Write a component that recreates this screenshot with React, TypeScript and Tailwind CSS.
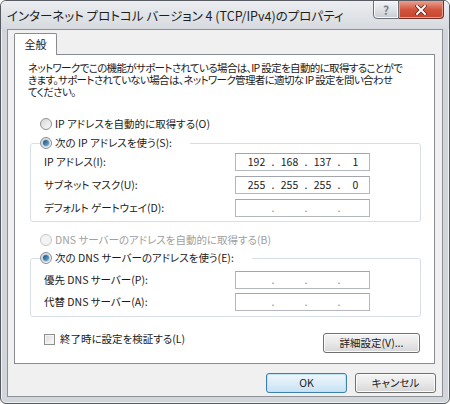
import React from 'react';

const FONT = "[font-family:'Noto_Sans_CJK_JP',sans-serif] [font-feature-settings:'palt']";

type RadioProps = { checked?: boolean; disabled?: boolean };

const Radio: React.FC<RadioProps> = ({ checked, disabled }) => (
  <span
    className={
      disabled
        ? 'w-[12px] h-[12px] rounded-full border border-[#c6c6c6] bg-[#f3f3f3] flex items-center justify-center shrink-0'
        : 'w-[12px] h-[12px] rounded-full border border-[#8e8f8f] bg-linear-to-br from-[#d6d6d6] to-[#fbfbfb] flex items-center justify-center shrink-0'
    }
  >
    {checked && (
      <span className="w-[6px] h-[6px] rounded-full bg-linear-to-br from-[#1d4d74] to-[#72b2de] shadow-[0_0_0_1px_#b9d3e6]" />
    )}
  </span>
);

const IpBox: React.FC<{ values?: string[] }> = ({ values }) => {
  const v = values ?? ['', '', '', ''];
  return (
    <div className="w-[135px] h-[18px] border border-[#b4b7bd] border-t-[#a3a6ad] bg-white flex items-center pl-[7px] leading-none">
      {v.map((n, i) => (
        <React.Fragment key={i}>
          <span className="w-[27px] text-center">{n}</span>
          {i < 3 && (
            <span className={values ? 'w-[6px] text-center' : 'w-[6px] text-center text-[#8a8a8a]'}>.</span>
          )}
        </React.Fragment>
      ))}
    </div>
  );
};

const Row: React.FC<{ label: string; values?: string[] }> = ({ label, values }) => (
  <>
    <div className="flex items-center h-[18px] whitespace-nowrap">{label}</div>
    <IpBox values={values} />
  </>
);

const Button: React.FC<{ children: React.ReactNode; primary?: boolean; className?: string }> = ({
  children,
  primary,
  className = '',
}) => (
  <button
    type="button"
    className={
      (primary
        ? 'border-[#3c7fb1] bg-linear-to-b from-[#eef7fc] via-[#dcedf8] to-[#c6e2f3] shadow-[inset_0_0_0_1px_#bfe3f8] '
        : 'border-[#707070] bg-linear-to-b from-[#f4f4f4] via-[#e9e9e9] to-[#d6d6d6] shadow-[inset_0_0_0_1px_#fcfcfc] ') +
      'h-[20px] border rounded-[3px] flex items-center justify-center text-[#1a1a1a] ' +
      className
    }
  >
    {children}
  </button>
);

export default function App() {
  return (
    <div
      className={`w-[450px] h-[404px] bg-[#d2d6db] border border-[#585c62] rounded-[6px] shadow-[inset_0_0_0_1px_#eef0f2] flex flex-col overflow-hidden ${FONT}`}
    >
      {/* Title bar */}
      <div className="h-[28px] flex items-start bg-linear-to-b from-[#eceef1] to-[#d6dade] shrink-0">
        <div className="flex-1 pl-[6px] pt-[6px] text-[12.5px] leading-[18px] text-[#1e1e1e] whitespace-nowrap">
          インターネット プロトコル バージョン 4 (TCP/IPv4)のプロパティ
        </div>
        <div className="flex mr-[5px] -mt-px">
          <div className="w-[26px] h-[19px] border border-[#6b7076] rounded-bl-[4px] bg-linear-to-b from-[#f3f4f6] via-[#dfe2e6] to-[#c8ccd2] shadow-[inset_0_0_0_1px_#f8f9fa] flex items-center justify-center text-[12px] font-bold text-[#7d8188] leading-none">
            ?
          </div>
          <div className="w-[45px] h-[19px] border border-l-0 border-[#6e3328] rounded-br-[4px] bg-linear-to-b from-[#e8a091] via-[#d2553f] to-[#c8432d] shadow-[inset_0_0_0_1px_#eb9b8c] flex items-center justify-center">
            <svg width="12" height="10" viewBox="0 0 12 10">
              <path d="M2 1 L10 9 M10 1 L2 9" stroke="#5a1f16" strokeWidth="3.4" strokeLinecap="square" />
              <path d="M2 1 L10 9 M10 1 L2 9" stroke="#ffffff" strokeWidth="2" strokeLinecap="square" />
            </svg>
          </div>
        </div>
      </div>

      {/* Client area */}
      <div className="flex-1 mx-[6px] mb-[6px] border border-[#8c9197] bg-[#f0f0f0] flex flex-col text-[10.5px] text-[#1a1a1a]">
        {/* Tab header */}
        <div className="flex pl-[6px] pt-[3px]">
          <div className="relative z-10 w-[43px] h-[22px] -mb-px border border-b-0 border-[#898c95] rounded-t-[2px] bg-white flex items-center justify-center text-[11px]">
            全般
          </div>
        </div>

        {/* Tab panel */}
        <div className="ml-[6px] mr-[7px] h-[310px] border border-[#898c95] bg-white flex flex-col">
          <p className="pl-[13px] pt-[7px] leading-[12px] tracking-[-0.65px] whitespace-nowrap">
            ネットワークでこの機能がサポートされている場合は、IP 設定を自動的に取得することがで
            <br />
            きます。サポートされていない場合は、ネットワーク管理者に適切な IP 設定を問い合わせ
            <br />
            てください。
          </p>

          <label className="ml-[25px] mt-[19px] h-[14px] flex items-center gap-[3px] whitespace-nowrap">
            <Radio />
            <span>IP アドレスを自動的に取得する(O)</span>
          </label>

          <fieldset className="ml-[15px] mt-[5px] w-[391px] border border-[#d5dfe5] rounded-[3px] pb-[4px]">
            <legend className="ml-[9px] pr-[18px]">
              <span className="h-[14px] flex items-center gap-[3px] whitespace-nowrap">
                <Radio checked />
                <span>次の IP アドレスを使う(S):</span>
              </span>
            </legend>
            <div className="mt-[3px] pl-[13px] grid grid-cols-[191px_135px] gap-y-[5px]">
              <Row label="IP アドレス(I):" values={['192', '168', '137', '1']} />
              <Row label="サブネット マスク(U):" values={['255', '255', '255', '0']} />
              <Row label="デフォルト ゲートウェイ(D):" />
            </div>
          </fieldset>

          <label className="ml-[25px] mt-[11px] h-[14px] flex items-center gap-[3px] whitespace-nowrap text-[#a0a0a0]">
            <Radio disabled />
            <span>DNS サーバーのアドレスを自動的に取得する(B)</span>
          </label>

          <fieldset className="ml-[15px] mt-[4px] w-[391px] border border-[#d5dfe5] rounded-[3px] pb-[5px]">
            <legend className="ml-[9px] pr-[18px]">
              <span className="h-[14px] flex items-center gap-[3px] whitespace-nowrap">
                <Radio checked />
                <span>次の DNS サーバーのアドレスを使う(E):</span>
              </span>
            </legend>
            <div className="mt-[6px] pl-[13px] grid grid-cols-[191px_135px] gap-y-[4px]">
              <Row label="優先 DNS サーバー(P):" />
              <Row label="代替 DNS サーバー(A):" />
            </div>
          </fieldset>

          <div className="mt-[16px] ml-[29px] mr-[14px] flex items-start justify-between">
            <label className="h-[12px] flex items-center gap-[5px] whitespace-nowrap">
              <span className="w-[11px] h-[11px] border border-[#8e8f8f] bg-linear-to-br from-[#dcdcdc] to-[#fafafa] shadow-[inset_0_0_0_1px_#f4f4f4] shrink-0" />
              <span>終了時に設定を検証する(L)</span>
            </label>
            <Button className="w-[97px] h-[19px]">詳細設定(V)...</Button>
          </div>
        </div>

        {/* Dialog buttons */}
        <div className="flex justify-end gap-[8px] mt-[9px] mr-[6px]">
          <Button primary className="w-[81px]">
            OK
          </Button>
          <Button className="w-[81px]">キャンセル</Button>
        </div>
      </div>
    </div>
  );
}
